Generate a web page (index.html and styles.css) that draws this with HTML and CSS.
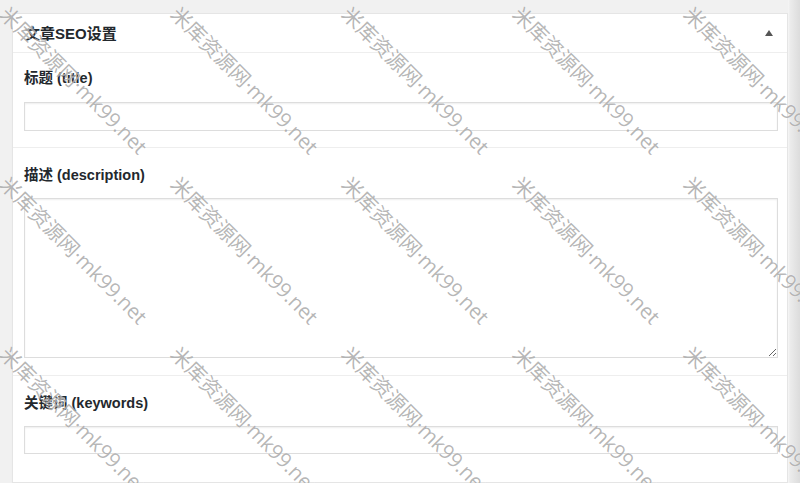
FILE: index.html
```html
<!DOCTYPE html>
<html lang="zh-CN">
<head>
<meta charset="utf-8">
<title>文章SEO设置</title>
<link rel="stylesheet" href="styles.css">
</head>
<body>
<div class="page">
  <div class="postbox">
    <div class="postbox-header">
      <h2 class="postbox-title">文章SEO设置</h2>
      <span class="toggle-indicator" aria-hidden="true"></span>
    </div>
    <div class="field field-first">
      <label class="field-label" for="seo-title">标题 (title)</label>
      <input class="field-input" id="seo-title" type="text">
    </div>
    <div class="field">
      <label class="field-label" for="seo-desc">描述 (description)</label>
      <textarea class="field-textarea" id="seo-desc"></textarea>
    </div>
    <div class="field field-last">
      <label class="field-label" for="seo-keywords">关键词 (keywords)</label>
      <input class="field-input" id="seo-keywords" type="text">
    </div>
  </div>
  <div class="edge"></div>
</div>

<div class="watermarks" aria-hidden="true">
  <span class="wm">米库资源网·mk99.net</span><span class="wm">米库资源网·mk99.net</span><span class="wm">米库资源网·mk99.net</span><span class="wm">米库资源网·mk99.net</span><span class="wm">米库资源网·mk99.net</span>
  <span class="wm">米库资源网·mk99.net</span><span class="wm">米库资源网·mk99.net</span><span class="wm">米库资源网·mk99.net</span><span class="wm">米库资源网·mk99.net</span><span class="wm">米库资源网·mk99.net</span>
  <span class="wm">米库资源网·mk99.net</span><span class="wm">米库资源网·mk99.net</span><span class="wm">米库资源网·mk99.net</span><span class="wm">米库资源网·mk99.net</span><span class="wm">米库资源网·mk99.net</span>
</div>
</body>
</html>
```

FILE: styles.css
```css
html, body {
  margin: 0;
  padding: 0;
}

body {
  width: 800px;
  height: 483px;
  overflow: hidden;
  position: relative;
  background: #f1f1f1;
  font-family: "Liberation Sans", "Noto Sans CJK SC", sans-serif;
  color: #23282d;
}

.page {
  display: flex;
  padding: 13px 0 0 12px;
}

/* meta box */
.postbox {
  width: 776px;
  box-sizing: border-box;
  background: #fff;
  border: 1px solid #e5e5e5;
  box-shadow: 0 1px 1px rgba(0, 0, 0, 0.04);
}

.edge {
  flex: 1;
  height: 483px;
  margin-top: -13px;
  background: linear-gradient(to right, #f6f6f6 0, #ececec 2px, #dcdcdc 12px);
}

.postbox-header {
  height: 38px;
  display: flex;
  align-items: center;
  justify-content: space-between;
  padding: 0 14px 0 12px;
  border-bottom: 1px solid #eeeeee;
}

.postbox-title {
  margin: 0;
  font-size: 15px;
  font-weight: bold;
  line-height: 1;
}

.toggle-indicator {
  width: 0;
  height: 0;
  border-left: 4px solid transparent;
  border-right: 4px solid transparent;
  border-bottom: 6px solid #555;
  margin-top: -1px;
}

/* form rows */
.field {
  display: flex;
  flex-direction: column;
  padding: 18px 9px 17px 11px;
  border-bottom: 1px solid #eeeeee;
}

.field-first {
  padding-top: 16px;
  padding-bottom: 16px;
}

.field-last {
  border-bottom: 0;
  padding-bottom: 16px;
}

.field-label {
  display: block;
  font-size: 14.5px;
  font-weight: bold;
  line-height: 18px;
  margin-bottom: 14px;
}

.field-first .field-label {
  margin-bottom: 15px;
}

.field-input,
.field-textarea {
  display: block;
  box-sizing: border-box;
  width: 100%;
  margin: 0;
  background: #fff;
  border: 1px solid #dddddd;
  box-shadow: inset 0 1px 2px rgba(0, 0, 0, 0.07);
  border-radius: 0;
  font: 14px "Liberation Sans", "Noto Sans CJK SC", sans-serif;
  outline: none;
}

.field-input {
  height: 29px;
  padding: 3px 5px;
}

.field-last .field-input {
  height: 28px;
}

.field-textarea {
  height: 160px;
  padding: 4px 5px;
  resize: vertical;
}

/* watermark overlay */
.watermarks {
  position: absolute;
  top: 0;
  left: 0;
  width: 800px;
  height: 483px;
  pointer-events: none;
  display: grid;
  grid-template-columns: repeat(5, 171px);
  grid-auto-rows: 170px;
  padding: 0 0 0 4px;
  box-sizing: border-box;
  overflow: hidden;
}

.wm {
  display: block;
  width: 0;
  height: 20px;
  white-space: nowrap;
  font-family: "Open Sans", "Noto Sans CJK SC", sans-serif;
  font-size: 20.5px;
  line-height: 20px;
  color: rgba(120, 120, 120, 0.55);
  text-shadow: 0 0 1px rgba(255, 255, 255, 0.9);
  transform-origin: 0 50%;
  transform: rotate(45deg);
}
```
